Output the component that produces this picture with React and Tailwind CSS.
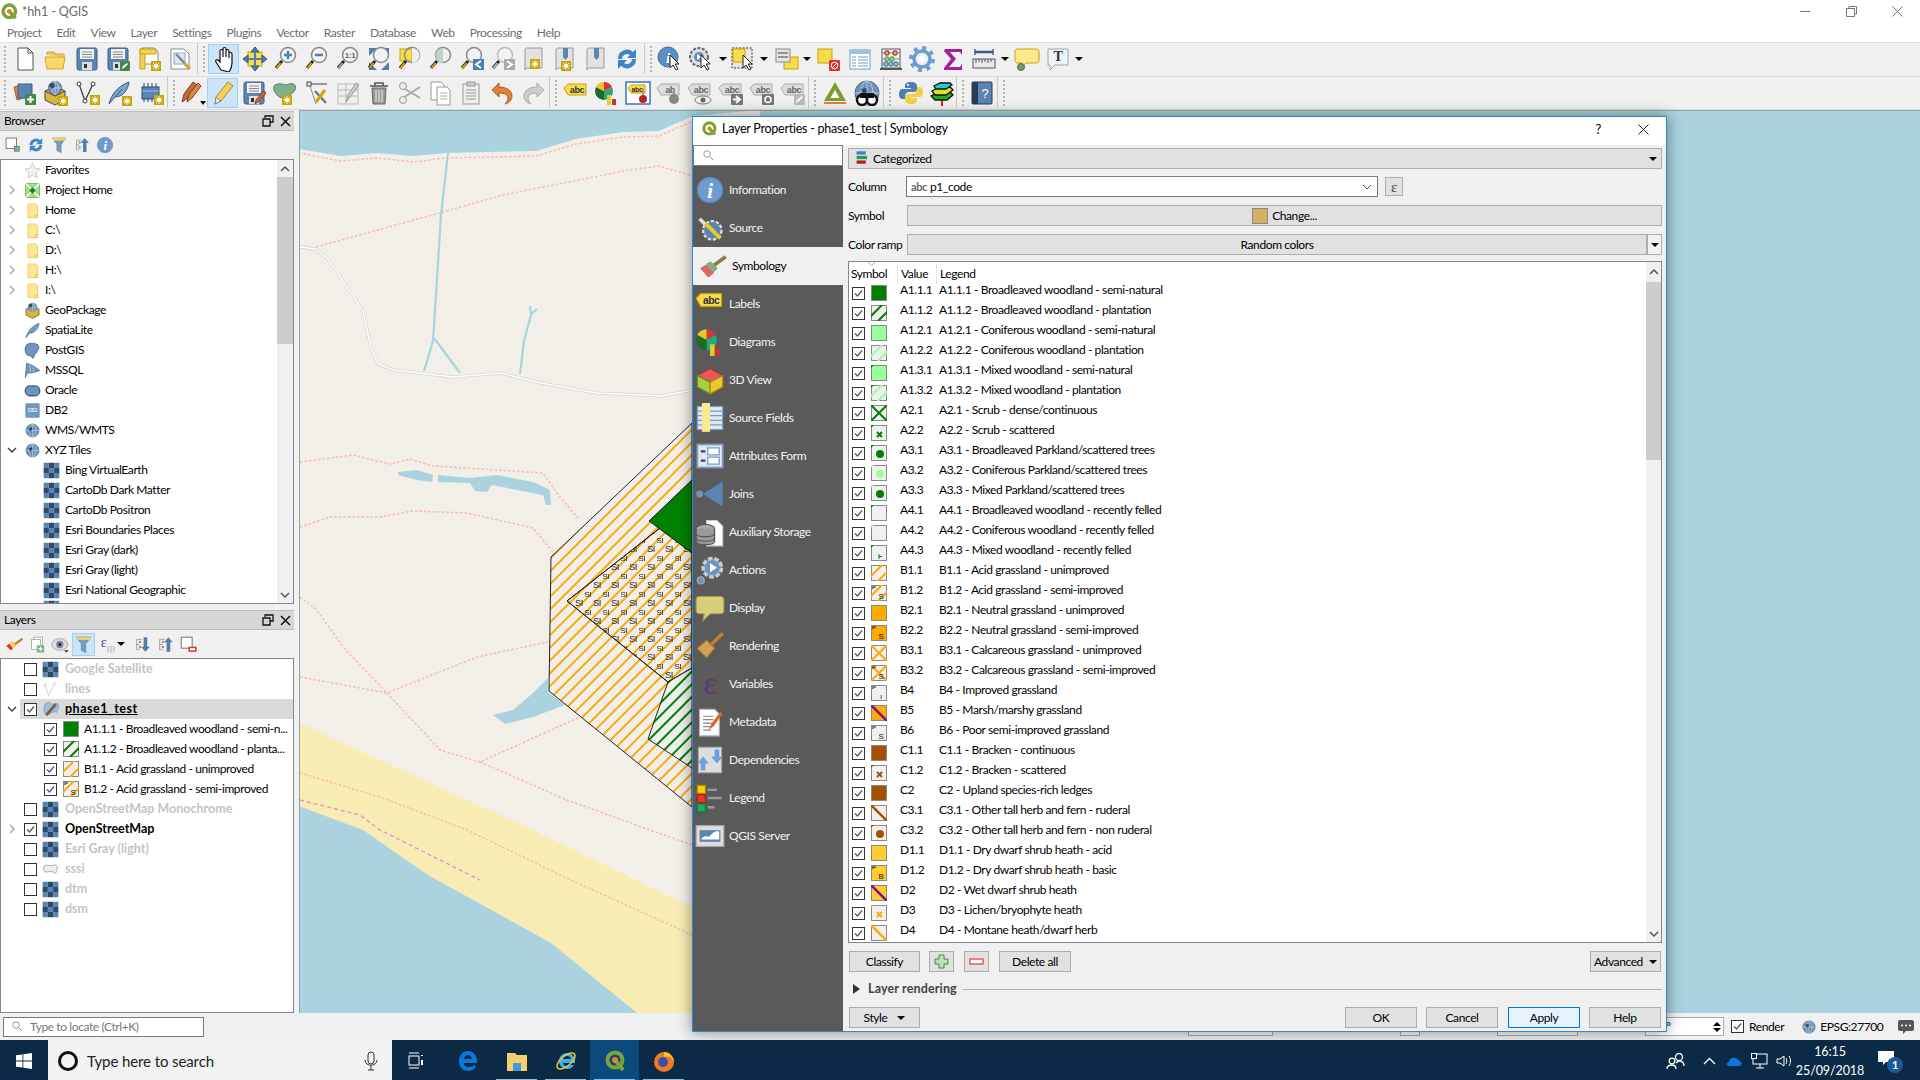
const Sun = ({ x = 15, y = 15 }) => (
    <g transform={`translate(${x} ${y})`}>
        <rect width="10" height="10" fill="#c9a300" />
        <path d="M5 1v8M1 5h8M2 2l6 6M8 2l-6 6" stroke="#fff" strokeWidth="0.8" />
        <circle cx="5" cy="5" r="2" fill="#fff" />
    </g>
);
const Arrow = ({ x = 0, y = 0 }) => (
    <path transform={`translate(${x} ${y})`} d="M12 10v13l3-3 3 5 2-1-3-5h4z" fill="#fff" stroke="#222" strokeWidth="1" />
);
const Mag = ({ fill = '#f2f2f2', ring = '#8a8a8a', handle = '#e0a800' }) => (
    <>
        <path d="M9 15l-6 7" stroke="#222" strokeWidth="3" />
        <path d="M7.5 17l-4 5" stroke={handle} strokeWidth="2" />
        <circle cx="15" cy="9" r="7.5" fill={fill} stroke={ring} strokeWidth="1.5" />
    </>
);
const Floppy = () => (
    <>
        <rect x="3" y="2" width="20" height="22" rx="2" fill="#5b84b1" stroke="#3e5f85" />
        <rect x="6" y="3" width="14" height="10" fill="#f2f2f2" />
        <path d="M8 6h10M8 8.5h10M8 11h10" stroke="#888" />
        <rect x="8" y="16" width="10" height="8" fill="#ddd" />
        <rect x="10" y="18" width="3" height="4" fill="#333" />
    </>
);
const Lbl = ({ c = '#ddd', b = '#aaa', t = 'abc', tc = '#666' }) => (
    <>
        <path d="M1 8l4-4h18v11H5z" fill={c} stroke={b} />
        <text x="14" y="13" fontSize="9" fontWeight="700" textAnchor="middle" fill={tc} fontFamily="Liberation Sans">{t}</text>
    </>
);
const Tile = () => (
    <>
        <rect x="1" y="1" width="24" height="24" fill="#fff" />
        <path d="M9 1h8v8H9zM1 9h8v8H1zM17 9h8v8h-8zM9 17h8v8H9z" fill="#2e4a6b" />
        <path d="M1 1h8v8H1zM17 1h8v8h-8zM9 9h8v8H9zM1 17h8v8H1zM17 17h8v8h-8z" fill="#5b84b1" />
    </>
);
const Globe = ({ x = 13, y = 13, r = 10 }) => (
    <>
        <circle cx={x} cy={y} r={r} fill="#6f93b8" stroke="#49688a" />
        <path d={`M${x - r} ${y}h${r * 2}M${x} ${y - r}v${r * 2}`} stroke="#cfdbe6" strokeWidth="0.8" />
        <ellipse cx={x} cy={y} rx={r / 2} ry={r} fill="none" stroke="#cfdbe6" strokeWidth="0.8" />
        <path d={`M${x - 6} ${y - 4}l5-1 1 4-4 2z`} fill="#2f4a66" />
    </>
);

const icons = {
    newp: <><path d="M6 2h10l5 5v17H6z" fill="#fff" stroke="#555" /><path d="M16 2v5h5" fill="none" stroke="#555" /></>,
    open: <><path d="M4 9V6h7l2 2h8v3" fill="#eec75a" stroke="#d2a62e" /><path d="M2 11h20l-2 12H4z" fill="#fbd765" stroke="#d2a62e" /></>,
    save: <Floppy />,
    saveas: <><Floppy /><rect x="15" y="15" width="10" height="10" rx="1" fill="#3f8a4b" /><path d="M17 23l1-3 4-3 1 1-4 4z" fill="#fff" /></>,
    layout: <><path d="M6 2h12l4 4v12H6z" fill="#fff" stroke="#888" /><path d="M4 3h5v20H4z" fill="#f2d25c" stroke="#c9a300" /><path d="M4 3h16v5H4z" fill="#f2d25c" stroke="#c9a300" /><Sun /></>,
    manager: <><path d="M4 3h13l5 5v15H4z" fill="#fff" stroke="#888" /><rect x="7" y="7" width="11" height="11" fill="#dfe8f2" stroke="#9ab" /><path d="M9 8l13 14" stroke="#888" strokeWidth="2.5" /><path d="M17 17l6 6" stroke="#d2a62e" strokeWidth="3" /></>,
    pan: <path d="M10 24l-5-8c-1-2 1-3 2-2l2 2V5c0-2 3-2 3 0v6-8c0-2 3-2 3 0v8-6c0-2 3-2 3 0v7-4c0-2 3-2 3 0v9c0 4-1 6-3 9z" fill="#fff" stroke="#111" strokeWidth="1.2" />,
    panto: <><rect x="6" y="6" width="14" height="14" fill="#f7dc4f" stroke="#c9a300" /><path d="M13 1l4 5H9zM13 25l-4-5h8zM1 13l5-4v8zM25 13l-5-4v8z" fill="#4f7fb0" stroke="#35587d" /><path d="M13 6v14M6 13h14" stroke="#4f7fb0" strokeWidth="2" /></>,
    zin: <><Mag /><path d="M15 5v8M11 9h8" stroke="#4f7fb0" strokeWidth="2.5" /></>,
    zout: <><Mag /><path d="M11 9h8" stroke="#4f7fb0" strokeWidth="2.5" /></>,
    z11: <><Mag handle="#aaa" /><text x="15" y="12" fontSize="8" fontWeight="700" textAnchor="middle" fill="#666" fontFamily="Liberation Sans">1:1</text></>,
    zfull: <><path d="M3 2h8L3 10zM23 2v8l-8-8zM3 24v-8l8 8zM23 24h-8l8-8z" fill="#4f7fb0" /><Mag /></>,
    zsel: <><rect x="3" y="3" width="12" height="12" fill="#f7dc4f" stroke="#c9a300" /><Mag fill="none" /><path d="M15 2a7.5 7.5 0 0 1 0 15z" fill="#eee" /></>,
    zlay: <><Mag fill="#eef2f2" /><path d="M15 2a7.5 7.5 0 0 0 0 15z" fill="#c5d3c5" /></>,
    zlast: <><Mag fill="#f2f2f2" /><rect x="14" y="13" width="11" height="11" fill="#4f7fb0" /><path d="M22 15l-5 3.5 5 3.5" fill="none" stroke="#fff" strokeWidth="2" /></>,
    znext: <><Mag handle="#bbb" ring="#bbb" /><rect x="14" y="13" width="11" height="11" fill="#aaa" /><path d="M17 15l5 3.5-5 3.5" fill="none" stroke="#fff" strokeWidth="2" /></>,
    map1: <><path d="M4 4c0-2 2-2 4-2h13v20H8c-2 0-4 0-4 2z" fill="#e2e2e2" stroke="#999" /><Sun x="9" y="13" /></>,
    map2: <><path d="M4 4c0-2 2-2 4-2h13v20H8c-2 0-4 0-4 2z" fill="#e2e2e2" stroke="#999" /><path d="M11 2h5v9l-2.5 3-2.5-3z" fill="#5b84b1" /><Sun x="9" y="15" /></>,
    map3: <><path d="M4 4c0-2 2-2 4-2h13v20H8c-2 0-4 0-4 2z" fill="#e2e2e2" stroke="#999" /><path d="M11 2h5v9l-2.5 3-2.5-3z" fill="#5b84b1" /></>,
    refresh: <><path d="M4 13a9 9 0 0 1 15-7l3-3v9h-9l3-3a5 5 0 0 0-8 4z" fill="#3f86c9" /><path d="M22 13a9 9 0 0 1-15 7l-3 3v-9h9l-3 3a5 5 0 0 0 8-4z" fill="#3f86c9" /></>,
    info: <><circle cx="11" cy="11" r="10" fill="#5c8ec4" stroke="#45709f" /><text x="11" y="17" fontSize="15" fontWeight="700" fontStyle="italic" textAnchor="middle" fill="#fff" fontFamily="Liberation Serif">i</text><Arrow x="1" y="-1" /></>,
    action: <><circle cx="11" cy="11" r="9" fill="#ddd" stroke="#666" strokeWidth="2" strokeDasharray="3 1.5" /><circle cx="11" cy="11" r="5" fill="#5c8ec4" /><path d="M9 8l5 3-5 3z" fill="#fff" /><Arrow x="1" y="-1" /></>,
    select: <><rect x="2" y="2" width="20" height="20" fill="#e5e5e5" stroke="#333" strokeDasharray="2 1.5" /><rect x="3" y="3" width="12" height="13" fill="#f7dc4f" stroke="#c9a300" /><Arrow x="1" y="-1" /></>,
    form: <><rect x="10" y="11" width="14" height="12" fill="#f7dc4f" stroke="#c9a300" /><rect x="2" y="3" width="14" height="13" fill="#e4e4e4" stroke="#888" /><path d="M4 7h10M4 11h10" stroke="#777" strokeWidth="1.5" /></>,
    desel: <><rect x="2" y="3" width="14" height="14" fill="#f7dc4f" stroke="#c9a300" /><rect x="13" y="14" width="11" height="11" rx="1" fill="#d33" /><circle cx="18.5" cy="19.5" r="3.3" fill="none" stroke="#fff" /><path d="M16 22l5-5" stroke="#fff" /></>,
    table: <><rect x="3" y="4" width="20" height="19" fill="#fff" stroke="#6e9bc8" /><path d="M3 4h20v4H3z" fill="#9cc0e0" /><path d="M5 11h4M5 14h4M5 17h4M5 20h4M11 11h10M11 14h10M11 17h10M11 20h10" stroke="#6e9bc8" /></>,
    abacus: <><rect x="4" y="3" width="18" height="19" fill="none" stroke="#555" /><path d="M2 23h22" stroke="#555" strokeWidth="2" /><path d="M4 7h18M4 13h18M4 18h18" stroke="#888" /><circle cx="9" cy="7" r="2" fill="none" stroke="#c33" strokeWidth="1.3" /><circle cx="17" cy="7" r="2" fill="none" stroke="#c33" strokeWidth="1.3" /><circle cx="9" cy="13" r="2" fill="none" stroke="#5a5" strokeWidth="1.3" /><circle cx="14" cy="13" r="2" fill="none" stroke="#5a5" strokeWidth="1.3" /><circle cx="8" cy="18" r="2" fill="none" stroke="#48a" strokeWidth="1.3" /><circle cx="13" cy="18" r="2" fill="none" stroke="#48a" strokeWidth="1.3" /><circle cx="18" cy="18" r="2" fill="none" stroke="#48a" strokeWidth="1.3" /></>,
    gear: <><circle cx="13" cy="13" r="8" fill="none" stroke="#6e9bd0" strokeWidth="3.5" /><circle cx="13" cy="13" r="11" fill="none" stroke="#6e9bd0" strokeWidth="4" strokeDasharray="4 4.6" /><circle cx="13" cy="13" r="3" fill="#fff" /></>,
    sigma: <path d="M5 3h17v6l-2-3H10l6 7-7 8h11l2-3v6H4v-2l7-9-7-8z" fill="#a020a0" />,
    ruler: <><path d="M4 6h18" stroke="#3d5f85" strokeWidth="2.5" /><path d="M4 3v6M22 3v6" stroke="#3d5f85" strokeWidth="1.5" /><rect x="2" y="13" width="22" height="9" fill="#e8e8e8" stroke="#555" /><path d="M5 13v4M8 13v3M11 13v4M14 13v3M17 13v4M20 13v3" stroke="#555" /></>,
    tip: <><path d="M4 3h18c2 0 3 1 3 3v8c0 2-1 3-3 3H12l-4 4v-4H4c-2 0-3-1-3-3V6c0-2 1-3 3-3z" fill="#fbe98e" stroke="#c9a300" /><circle cx="7" cy="21" r="3.5" fill="#6f9a6f" stroke="#666" /></>,
    annot: <><path d="M3 3h20v16H10l-5 5v-5H3z" fill="#eef3f5" stroke="#9aa" /><text x="13" y="15" fontSize="14" fontWeight="700" textAnchor="middle" fill="#333" fontFamily="Liberation Serif">T</text></>,
    dsm: <><path d="M3 7l13-3 2 12-12 4z" fill="#d98a42" stroke="#a85f20" /><path d="M7 4h14v14H7z" fill="#5b84b1" stroke="#3e5f85" /><rect x="14" y="14" width="11" height="11" rx="1" fill="#3f8a4b" /><path d="M19.5 16v7M16 19.5h7" stroke="#fff" strokeWidth="2" /></>,
    gpkg: <><path d="M3 11l10-5 10 5v9l-10 5-10-5z" fill="#d9b63a" stroke="#444" /><path d="M3 11l10 5 10-5" fill="none" stroke="#444" /><Globe x={13} y={8} r={6.5} /><Sun x="16" y="16" /></>,
    gpkg0: <><path d="M3 11l10-5 10 5v9l-10 5-10-5z" fill="#d9b63a" stroke="#444" /><Globe x={13} y={8} r={6.5} /></>,
    shape: <><path d="M5 4l6 17 8-17" fill="none" stroke="#333" strokeWidth="1.2" /><circle cx="5" cy="4" r="2" fill="#fff" stroke="#333" /><circle cx="11" cy="21" r="2" fill="#fff" stroke="#333" /><circle cx="19" cy="4" r="2" fill="#fff" stroke="#333" /><Sun x="16" y="15" /></>,
    feather: <><path d="M3 24c2-8 7-17 20-22-1 9-7 15-14 15" fill="#7ea2c8" stroke="#3d5f85" /><path d="M3 24L16 9" stroke="#3d5f85" /></>,
    spat: <><path d="M3 24c2-8 7-17 20-22-1 9-7 15-14 15" fill="#7ea2c8" stroke="#3d5f85" /><path d="M3 24L16 9" stroke="#3d5f85" /><Sun x="16" y="16" /></>,
    chip: <><rect x="4" y="7" width="17" height="12" fill="#5b84b1" stroke="#2e4a6b" /><path d="M6 3v4M10 3v4M14 3v4M18 3v4M6 19v3M10 19v3M14 19v3" stroke="#2e4a6b" /><path d="M4 11h17" stroke="#9cc0e0" /><Sun x="16" y="15" /></>,
    pencils: <><path d="M2 22l2-8 9-12 4 3-9 13z" fill="#c66a3d" stroke="#7a3f20" /><path d="M7 22l2-8 9-11 3 3-9 12z" fill="#d98a42" stroke="#7a3f20" /><path d="M20 21h6l-3 4z" fill="#111" /></>,
    pencil: <><path d="M5 24l1-7L18 2l5 4L11 21z" fill="#f2d25c" stroke="#a88a20" /><path d="M5 24l1-7 5 4z" fill="#eee" stroke="#888" /></>,
    savee: <><Floppy /><path d="M14 24l1-4 8-9 2 2-8 9z" fill="#d9692f" stroke="#8a3f10" /></>,
    addf: <><path d="M3 5c6-3 9 1 14-1s8 2 6 6-4 3-6 6-9 3-12-1S0 8 3 5z" fill="#7faf8a" stroke="#5a8a66" /><Sun x="10" y="15" /></>,
    vertex: <><rect x="3" y="2" width="4" height="4" fill="none" stroke="#444" /><path d="M7 4h16" stroke="#444" /><path d="M6 6l6 18" stroke="#888" /><path d="M11 11l11 12" stroke="#777" strokeWidth="2.5" /><path d="M21 10l-9 12" stroke="#d9a300" strokeWidth="3" /></>,
    modify: <><rect x="3" y="4" width="20" height="20" fill="#eee" stroke="#bbb" /><path d="M3 10h20M3 16h20M11 4v20" stroke="#bbb" /><path d="M11 22l2-7 8-12 3 2-9 12z" fill="#ccc" stroke="#999" /></>,
    trash: <><path d="M4 6h18M9 6V3h8v3" fill="none" stroke="#555" strokeWidth="1.6" /><path d="M6 8h14l-1 16H7z" fill="#999" stroke="#666" /><path d="M10 10v12M13 10v12M16 10v12" stroke="#eee" /></>,
    cut: <><path d="M3 6l20 12M3 20L23 7" stroke="#aaa" strokeWidth="2" /><circle cx="6" cy="6" r="3.5" fill="#eee" stroke="#999" /><circle cx="6" cy="20" r="3.5" fill="#eee" stroke="#999" /></>,
    copy: <><path d="M3 2h10l3 3v15H3z" fill="#fff" stroke="#999" /><path d="M9 7h10l3 3v15H9z" fill="#fff" stroke="#999" /><path d="M12 13h7M12 16h7M12 19h7" stroke="#aaa" /></>,
    paste: <><rect x="5" y="4" width="16" height="20" fill="#eee" stroke="#999" /><rect x="9" y="2" width="8" height="4" fill="#ccc" stroke="#999" /><path d="M8 10h10M8 13h10M8 16h10M8 19h10" stroke="#999" /></>,
    undo: <path d="M3 10l7-7v4c8 0 13 4 13 9 0 4-3 7-7 8 2-2 3-4 3-6 0-3-3-5-9-5v4z" fill="#e0803a" stroke="#b85a1a" />,
    redo: <path d="M23 10l-7-7v4C8 7 3 11 3 16c0 4 3 7 7 8-2-2-3-4-3-6 0-3 3-5 9-5v4z" fill="#ccc" stroke="#aaa" />,
    lab1: <Lbl c="#f7dc4f" b="#c9a300" tc="#333" />,
    diag: <><path d="M10 11V2a9 9 0 0 1 8 5z" fill="#d33" /><path d="M10 11l8-4a9 9 0 0 1-8 13z" fill="#2a7" /><path d="M10 11v9a9 9 0 0 1-8-13z" fill="#1a6a2a" /><path d="M10 11L2 7a9 9 0 0 1 8-5z" fill="#e8c82a" /><rect x="13" y="15" width="4" height="10" fill="#e8c82a" /><rect x="18" y="19" width="4" height="6" fill="#c33" /></>,
    lab2: <><rect x="1" y="2" width="24" height="22" fill="#fff" stroke="#2a6ac0" strokeWidth="1.4" /><path d="M3 8l3-3h14v8H6z" fill="#f7dc4f" stroke="#c9a300" /><text x="12" y="12" fontSize="7" fontWeight="700" textAnchor="middle" fill="#333" fontFamily="Liberation Sans">abc</text><path d="M18 9v8" stroke="#999" strokeWidth="2" /><circle cx="18" cy="19" r="4" fill="#b22" /></>,
    lab3: <><Lbl t="ab" /><path d="M18 9v8" stroke="#999" strokeWidth="2" /><circle cx="18" cy="19" r="5" fill="#888" /></>,
    lab4: <><Lbl /><ellipse cx="16" cy="20" rx="8" ry="4" fill="#f2f2f2" stroke="#777" /><circle cx="16" cy="20" r="2.5" fill="#666" /></>,
    lab5: <><Lbl /><rect x="13" y="14" width="12" height="11" rx="1" fill="#777" /><path d="M15 19.5h5M18 16l4 3.5-4 3.5" fill="none" stroke="#fff" strokeWidth="2" /></>,
    lab6: <><Lbl /><rect x="13" y="14" width="12" height="11" rx="1" fill="#777" /><circle cx="19" cy="19.5" r="3" fill="none" stroke="#fff" strokeWidth="1.6" /></>,
    lab7: <><Lbl /><rect x="14" y="14" width="11" height="11" rx="1" fill="#bbb" /><path d="M16 23l1-3 5-4 1 1-5 5z" fill="#fff" /></>,
    delta: <><path d="M13 2l11 19H2z" fill="#7a9e2e" /><path d="M13 10l4.5 8h-9z" fill="#fff" /><rect x="2" y="22" width="22" height="2" fill="#e0803a" /></>,
    binoc: <><Globe r={12} /><circle cx="8" cy="20" r="5" fill="#fff" stroke="#111" strokeWidth="2.5" /><circle cx="18" cy="20" r="5" fill="#fff" stroke="#111" strokeWidth="2.5" /><rect x="6" y="13" width="14" height="5" fill="#111" /></>,
    python: <><path d="M13 2c-5 0-6 2-6 4v2h6v1H5c-3 0-4 2-4 5s1 5 4 5h2v-3c0-2 2-4 4-4h5c2 0 3-1 3-3V6c0-2-2-4-6-4z" fill="#4f7fb0" /><path d="M13 24c5 0 6-2 6-4v-2h-6v-1h8c3 0 4-2 4-5s-1-5-4-5h-2v3c0 2-2 4-4 4h-5c-2 0-3 1-3 3v3c0 2 2 4 6 4z" fill="#f4cf4a" /><circle cx="10" cy="5" r="1" fill="#fff" /></>,
    lay3d: <><path d="M13 2v24" stroke="#d22" strokeWidth="2" /><path d="M2 16l7-4h12l3 3-6 5H6z" fill="#2a2" stroke="#111" strokeWidth="1.3" /><path d="M3 11l7-4h11l3 3-7 5H6z" fill="#dfe02a" stroke="#111" strokeWidth="1.3" /><path d="M5 6l6-3h10l2 2-6 4H7z" fill="#2cc" stroke="#111" strokeWidth="1.3" /></>,
    book: <><rect x="3" y="2" width="20" height="22" rx="1" fill="#5b84b1" stroke="#2a3a4f" /><rect x="3" y="2" width="6" height="22" fill="#2a3a4f" /><text x="16" y="18" fontSize="13" textAnchor="middle" fill="#fff" fontFamily="Liberation Sans">?</text></>,
    lnew: <><rect x="3" y="3" width="15" height="15" fill="#fff" stroke="#777" strokeWidth="1.4" /><rect x="15" y="15" width="7" height="7" fill="#7fb48a" stroke="#4a7a55" /></>,
    filter: <><path d="M3 3h20l-7 9v12l-6-3v-9z" fill="#7a9cc0" stroke="#5a7ca0" /><path d="M3 3h20l-2 4H5z" fill="#f2d25c" /></>,
    collapse: <><path d="M5 6h7M5 6v14h4M5 13h4" stroke="#888" fill="none" /><rect x="8" y="8" width="3" height="3" fill="#e0803a" /><rect x="8" y="15" width="3" height="3" fill="#e0803a" /><path d="M17 3l6 7h-3.5v13h-5V10H11z" fill="#4f7fb0" /></>,
    expand: <><path d="M5 6h7M5 6v14h4M5 13h4" stroke="#888" fill="none" /><rect x="8" y="8" width="3" height="3" fill="#e0803a" /><rect x="8" y="15" width="3" height="3" fill="#e0803a" /><path d="M17 23l6-7h-3.5V3h-5v13H11z" fill="#4f7fb0" /></>,
    infos: <><circle cx="13" cy="13" r="11" fill="#6e9bd0" stroke="#5a82b0" /><text x="13" y="20" fontSize="18" fontWeight="700" fontStyle="italic" textAnchor="middle" fill="#fff" fontFamily="Liberation Serif">i</text></>,
    style: <><path d="M13 13L24 5" stroke="#8a7a4a" strokeWidth="3" /><path d="M2 15l9-6 6 6-8 8z" fill="#8fa8c8" /><path d="M2 15l5-3 7 7-5 4z" fill="#d9695f" /><path d="M7 11l4-2 6 6-3 3z" fill="#7fb46b" /></>,
    paint: <><path d="M13 13L24 5" stroke="#b8862a" strokeWidth="3" /><path d="M2 15l8-6 5 5-7 7z" fill="#e0803a" /><path d="M2 15l4-3 5 6-3 3z" fill="#d33" /><path d="M6 12l4-3 5 5-4 4z" fill="#f2d25c" /></>,
    addg: <><rect x="8" y="3" width="12" height="14" fill="#fff" stroke="#999" /><rect x="5" y="6" width="12" height="14" fill="#fff" stroke="#999" /><rect x="12" y="14" width="10" height="10" fill="#7fb48a" /><path d="M17 16v6M14 19h6" stroke="#fff" strokeWidth="1.5" /></>,
    eye: <><ellipse cx="12" cy="13" rx="11" ry="8" fill="#ddd" stroke="#999" /><circle cx="12" cy="13" r="5" fill="#7a8a9a" /><circle cx="12" cy="13" r="2" fill="#222" /><path d="M18 21h6l-3 3z" fill="#222" /></>,
    eps: <><text x="9" y="16" fontSize="20" textAnchor="middle" fill="#6a3a8a" fontFamily="Liberation Serif">ε</text><path d="M14 15h10v9H14z" fill="#ccc" /><path d="M17 15v9M21 15v9" stroke="#fff" /></>,
    lremove: <><rect x="3" y="3" width="15" height="15" fill="#fff" stroke="#777" strokeWidth="1.4" /><rect x="14" y="17" width="9" height="5" fill="#fff" stroke="#d33" strokeWidth="2" /></>,
    star: <path d="M13 2l3.5 7.5 8 1-6 5.5 1.5 8-7-4-7 4 1.5-8-6-5.5 8-1z" fill="#f2f2ec" stroke="#b8b8a8" />,
    phome: <><rect x="2" y="2" width="22" height="22" fill="#a8dc8a" stroke="#5ca83a" /><path d="M2 2l22 22M24 2L2 24" stroke="#fff" strokeWidth="2" /><path d="M13 8l5 5-5 5-5-5z" fill="#0a8a2a" /></>,
    fold: <><path d="M6 3h12l3 3v18H6z" fill="#fee698" stroke="#e8bd3a" /><rect x="17" y="20" width="4" height="4" fill="#fee698" stroke="#e8bd3a" /></>,
    pg: <path d="M4 4c4-3 12-3 17 0 3 3 2 8-1 10 0 3-2 4-3 3l-2 7c-2 1-4 0-4-3-5 1-8-1-9-6-1-4 0-8 2-11z" fill="#6e93bc" stroke="#3e5f85" />,
    mssql: <><path d="M4 2c8 2 14 6 20 11-6 3-12 4-19 4l-3 7z" fill="#6e93bc" stroke="#3e5f85" /><path d="M9 4l1 12M14 7l1 9" stroke="#cfdbe6" /></>,
    oracle: <rect x="2" y="6" width="22" height="15" rx="7" fill="#6e93bc" stroke="#3a5f85" strokeWidth="2" />,
    db2: <><rect x="2" y="2" width="22" height="22" rx="2" fill="#7097c2" /><text x="13" y="16" fontSize="8" textAnchor="middle" fill="#fff" fontFamily="Liberation Sans">DB2</text></>,
    wms: <Globe />,
    tile: <Tile />,
    lines: <><path d="M5 6l5 16 9-18" fill="none" stroke="#bbb" /><circle cx="5" cy="6" r="1.7" fill="#fff" stroke="#bbb" /><circle cx="19" cy="4" r="1.7" fill="#fff" stroke="#bbb" /></>,
    poly: <><path d="M4 6c4-3 8-3 10 0 3 1 7-3 9 0 2 3 0 9-2 12-3-3-7 1-10 2s-8 0-8-4 1-7 1-10z" fill="#9cc0e0" stroke="#6e93bc" /><path d="M6 22L20 6" stroke="#8a5a3a" strokeWidth="4" /></>,
    raster: <path d="M3 8c3-3 6-1 10-1s8-2 10 1c2 4-1 5-1 8s-2 3-5 1-9 0-11 0-5-3-3-9z" fill="#eee" stroke="#aaa" strokeWidth="1.5" />,
    source: <><path d="M4 5l9 9" stroke="#ddd" strokeWidth="3" /><circle cx="15" cy="15" r="8" fill="#5b84b1" stroke="#ddd" strokeWidth="2" strokeDasharray="3 1.5" /><path d="M9 9l13 13" stroke="#e8c82a" strokeWidth="3.5" /></>,
    form3d: <><path d="M13 3l11 6-11 6L2 9z" fill="#e85a5a" stroke="#a33" /><path d="M2 9l11 6v10L2 19z" fill="#a8d040" stroke="#6a8a20" /><path d="M24 9l-11 6v10l11-6z" fill="#e8c82a" stroke="#a88a20" /></>,
    fields: <><rect x="2" y="3" width="22" height="20" fill="#dfe8f2" stroke="#7a9cc0" /><path d="M2 7h22M2 11h22M2 15h22M2 19h22" stroke="#7a9cc0" /><rect x="6" y="0" width="7" height="25" fill="#fbe98e" /></>,
    attr: <><rect x="2" y="3" width="22" height="20" fill="#dfe8f2" stroke="#7a9cc0" strokeWidth="1.5" /><path d="M5 9h4M5 17h4" stroke="#444" strokeWidth="2" /><rect x="11" y="6" width="10" height="6" fill="#fff" stroke="#6e93bc" /><rect x="11" y="14" width="10" height="6" fill="#fff" stroke="#6e93bc" /></>,
    joins: <><circle cx="4" cy="13" r="3" fill="#6e93bc" /><path d="M7 13L24 2v22z" fill="#5b84b1" /></>,
    aux: <><path d="M10 3h9l5 5v17H10z" fill="#fff" stroke="#ccc" /><ellipse cx="9" cy="10" rx="8" ry="3.5" fill="#aaa" stroke="#555" /><path d="M1 10v11c0 4 16 4 16 0V10" fill="#999" stroke="#555" /><path d="M1 14c0 4 16 4 16 0M1 18c0 4 16 4 16 0" fill="none" stroke="#555" /></>,
    actions: <><circle cx="15" cy="11" r="8" fill="#6e93bc" stroke="#ccc" strokeWidth="3" strokeDasharray="4 1.6" /><path d="M13 7l6 4-6 4z" fill="#fff" /><circle cx="5" cy="22" r="3" fill="#6e93bc" stroke="#aaa" /></>,
    display: <path d="M4 3h18c2 0 3 1 3 3v9c0 2-1 3-3 3H13l-6 6 1-6H4c-2 0-3-1-3-3V6c0-2 1-3 3-3z" fill="#d8cf7e" stroke="#a89e50" />,
    render: <><path d="M14 12L24 2" stroke="#b8862a" strokeWidth="3" /><path d="M2 15l8-7 7 7-7 8z" fill="#d2a05a" stroke="#a87a30" /></>,
    vars: <text x="13" y="22" fontSize="28" textAnchor="middle" fill="#5d3a6e" fontFamily="Liberation Serif">ε</text>,
    meta: <><path d="M4 2h13l4 4v19H4z" fill="#fff" stroke="#bbb" /><path d="M7 8h9M7 11h9M7 14h9M7 17h7M7 20h7" stroke="#888" /><path d="M12 20l2-5 8-11 2 2-8 11z" fill="#d9692f" /></>,
    deps: <><rect x="3" y="2" width="20" height="22" fill="#ddd" stroke="#aaa" /><path d="M2 16l5-6 5 6H9v6H5v-6z" fill="#6ea0dc" /><path d="M24 10l-5 6-5-6h3V4h4v6z" fill="#6ea0dc" /></>,
    legend: <><rect x="2" y="2" width="7" height="7" fill="#fc0" stroke="#a80" /><rect x="2" y="10" width="7" height="7" fill="#e33" stroke="#a20" /><rect x="2" y="18" width="7" height="7" fill="#2a6" stroke="#174" /><path d="M11 6h8M11 13h12M11 21h6" stroke="#999" strokeWidth="2" /></>,
    server: <><rect x="1" y="4" width="24" height="18" fill="#ddd" stroke="#aaa" /><path d="M4 8h18v10H4z" fill="#5b84b1" /><path d="M5 16c4-6 6 0 9-4s5-3 7-3v7z" fill="#fff" /></>,
    categ: <><rect x="4" y="2" width="14" height="5" fill="#2a8ac0" /><rect x="4" y="9" width="16" height="5" fill="#1e9a5a" /><rect x="4" y="16" width="14" height="5" fill="#b02020" /></>,
    search: <><circle cx="10" cy="10" r="6.5" fill="none" stroke="#888" strokeWidth="1.6" /><path d="M15 15l7 7" stroke="#888" strokeWidth="2" /></>,
    qgis: <><circle cx="12" cy="12" r="9" fill="none" stroke="#7ba33a" strokeWidth="5" /><path d="M13 13l8 9" stroke="#7ba33a" strokeWidth="5" /><circle cx="12" cy="12" r="3.5" fill="#e8812e" /></>,
};

const Ic = ({ n, s = 26, className = '' }) => (
    <svg width={s} height={s} viewBox="0 0 26 26" className={`shrink-0 ${className}`}>{icons[n]}</svg>
);
const Caret = ({ className = '' }) => <div className={`w-0 h-0 border-x-[4px] border-x-transparent border-t-[4px] border-t-black shrink-0 ${className}`} />;
const Chev = ({ open, className = '' }) => (
    <svg width="10" height="10" viewBox="0 0 10 10" className={`shrink-0 ${className}`}>
        <path d={open ? 'M1 3l4 4 4-4' : 'M3 1l4 4-4 4'} fill="none" stroke={open ? '#444' : '#aaa'} strokeWidth="1.5" />
    </svg>
);
const Check = ({ on = true, className = '' }) => (
    <div className={`w-[13px] h-[13px] border border-[#333] bg-white shrink-0 ${className}`}>
        {on && <svg width="11" height="11" viewBox="0 0 11 11"><path d="M2 5.5l2.5 2.5L9 2.5" fill="none" stroke="#555" strokeWidth="1.2" /></svg>}
    </div>
);
const Grip = () => <div className="w-[3px] h-[26px] mx-[2px] border-l-2 border-dotted border-[#b5b5b5] shrink-0" />;
const Sep = () => <div className="w-px h-full bg-[#c8c8c8] shrink-0" />;

const Tb = ({ n, w = 31, active, caret, s = 26 }) => (
    <>
        <div style={{ width: w }} className={`h-[30px] flex items-center justify-center shrink-0 ${active ? 'bg-[#cce4f7] border border-[#99d1ff]' : ''}`}>
            <Ic n={n} s={s} />
        </div>
        {caret && <Caret className={caret} />}
    </>
);

const Symb = ({ bg = '#f0f0f0', h, x, b, k, d, sx, t, tick, border = '#8a8a8a', sw = 2 }) => (
    <svg width="16" height="16" viewBox="0 0 16 16" className="shrink-0">
        <rect x="0.5" y="0.5" width="15" height="15" fill={bg} stroke={border} />
        {h && <path d="M-1 12L12 -1M5 18L18 5" stroke={h} strokeWidth={sw} />}
        {x && <path d="M0 0L16 16M16 0L0 16" stroke={x} strokeWidth="2" />}
        {b && <path d="M0 0L16 16" stroke={b} strokeWidth="2.5" />}
        {k && <path d="M0 0h3L0 3z" fill={k} />}
        {d && <circle cx="9" cy="9" r="4" fill={d} />}
        {sx && <path d="M6 7l5 5M11 7l-5 5" stroke={sx} strokeWidth="2" />}
        {tick && <path d="M8 9v5M8 11.5h3" stroke={tick} fill="none" />}
        {t && <text x="10" y="14" fontSize="8" textAnchor="middle" fill="#111" fontFamily="Liberation Sans">{t}</text>}
        {t && <path d="M2 1v3M4 1v2" stroke="#111" />}
    </svg>
);

const O = '#ffaa00', G = '#008000', L = '#99ff99', B = '#a35200', Y = '#ffcc33', P = '#8a0a8a';
const rows = [
    ['A1.1.1', 'A1.1.1 - Broadleaved woodland - semi-natural', { bg: G }],
    ['A1.1.2', 'A1.1.2 - Broadleaved woodland - plantation', { h: G }],
    ['A1.2.1', 'A1.2.1 - Coniferous woodland - semi-natural', { bg: L }],
    ['A1.2.2', 'A1.2.2 - Coniferous woodland - plantation', { h: L }],
    ['A1.3.1', 'A1.3.1 - Mixed woodland - semi-natural', { bg: L, k: G }],
    ['A1.3.2', 'A1.3.2 - Mixed woodland - plantation', { h: L, k: G }],
    ['A2.1', 'A2.1 - Scrub - dense/continuous', { x: G }],
    ['A2.2', 'A2.2 - Scrub - scattered', { k: G, sx: G }],
    ['A3.1', 'A3.1 - Broadleaved Parkland/scattered trees', { k: G, d: G }],
    ['A3.2', 'A3.2 - Coniferous Parkland/scattered trees', { k: L, d: L }],
    ['A3.3', 'A3.3 - Mixed Parkland/scattered trees', { k: L, d: G }],
    ['A4.1', 'A4.1 - Broadleaved woodland - recently felled', { k: G }],
    ['A4.2', 'A4.2 - Coniferous woodland - recently felled', { k: L }],
    ['A4.3', 'A4.3 - Mixed woodland - recently felled', { k: G, tick: G }],
    ['B1.1', 'B1.1 - Acid grassland - unimproved', { h: O }],
    ['B1.2', 'B1.2 - Acid grassland - semi-improved', { h: O, t: 'S' }],
    ['B2.1', 'B2.1 - Neutral grassland - unimproved', { bg: O }],
    ['B2.2', 'B2.2 - Neutral grassland - semi-improved', { bg: O, t: 'S' }],
    ['B3.1', 'B3.1 - Calcareous grassland - unimproved', { x: O }],
    ['B3.2', 'B3.2 - Calcareous grassland - semi-improved', { x: O, t: 'S' }],
    ['B4', 'B4 - Improved grassland', { t: 'ı' }],
    ['B5', 'B5 - Marsh/marshy grassland', { bg: O, b: P }],
    ['B6', 'B6 - Poor semi-improved grassland', { t: 'S' }],
    ['C1.1', 'C1.1 - Bracken - continuous', { bg: B }],
    ['C1.2', 'C1.2 - Bracken - scattered', { k: B, sx: B }],
    ['C2', 'C2 - Upland species-rich ledges', { bg: B }],
    ['C3.1', 'C3.1 - Other tall herb and fern - ruderal', { b: B }],
    ['C3.2', 'C3.2 - Other tall herb and fern - non ruderal', { k: B, d: B }],
    ['D1.1', 'D1.1 - Dry dwarf shrub heath - acid', { bg: Y }],
    ['D1.2', 'D1.2 - Dry dwarf shrub heath - basic', { bg: Y, t: 'B' }],
    ['D2', 'D2 - Wet dwarf shrub heath', { bg: Y, b: P }],
    ['D3', 'D3 - Lichen/bryophyte heath', { k: O, sx: O }],
    ['D4', 'D4 - Montane heath/dwarf herb', { b: O }],
];

const browserRows = [
    [0, 'star', 'Favorites'], [1, 'phome', 'Project Home'], [1, 'fold', 'Home'], [1, 'fold', 'C:\\'], [1, 'fold', 'D:\\'],
    [1, 'fold', 'H:\\'], [1, 'fold', 'I:\\'], [0, 'gpkg0', 'GeoPackage'], [0, 'feather', 'SpatiaLite'], [0, 'pg', 'PostGIS'],
    [0, 'mssql', 'MSSQL'], [0, 'oracle', 'Oracle'], [0, 'db2', 'DB2'], [0, 'wms', 'WMS/WMTS'], [2, 'wms', 'XYZ Tiles'],
];
const xyz = ['Bing VirtualEarth', 'CartoDb Dark Matter', 'CartoDb Positron', 'Esri Boundaries Places', 'Esri Gray (dark)', 'Esri Gray (light)', 'Esri National Geographic'];

const sidebar = [
    ['infos', 'Information'], ['source', 'Source'], ['style', 'Symbology', true], ['lab1', 'Labels'], ['diag', 'Diagrams'], ['form3d', '3D View'],
    ['fields', 'Source Fields'], ['attr', 'Attributes Form'], ['joins', 'Joins'], ['aux', 'Auxiliary Storage'], ['actions', 'Actions'], ['display', 'Display'],
    ['render', 'Rendering'], ['vars', 'Variables'], ['meta', 'Metadata'], ['deps', 'Dependencies'], ['legend', 'Legend'], ['server', 'QGIS Server'],
];

const menus = ['Project', 'Edit', 'View', 'Layer', 'Settings', 'Plugins', 'Vector', 'Raster', 'Database', 'Web', 'Processing', 'Help'];

const PanelHead = ({ title }) => (
    <div className="h-[20px] bg-[#d6d6d6] border-y border-[#bdbdbd] flex items-center pl-1 pr-[3px] shrink-0">
        <span className="flex-1">{title}</span>
        <svg width="12" height="12" viewBox="0 0 12 12" className="mr-[6px]"><path d="M3 3V1h8v6H8M1 4h7v7H1z" fill="none" stroke="#111" strokeWidth="1.3" /></svg>
        <svg width="11" height="11" viewBox="0 0 11 11"><path d="M1 1l9 9M10 1l-9 9" stroke="#111" strokeWidth="1.5" /></svg>
    </div>
);

const Btn = ({ children, className = '' }) => (
    <div className={`h-[21px] bg-[#e1e1e1] border border-[#adadad] flex items-center justify-center shrink-0 ${className}`}>{children}</div>
);

const MapView = () => (
    <svg viewBox="299 110 1621 903" width="1621" height="903" className="block">
        <defs>
            <pattern id="ho" patternUnits="userSpaceOnUse" width="9" height="9" patternTransform="rotate(45)">
                <rect width="9" height="9" fill="#efefef" />
                <rect width="2" height="9" fill="#ffaa00" />
            </pattern>
            <pattern id="hg" patternUnits="userSpaceOnUse" width="9" height="9" patternTransform="rotate(45)">
                <rect width="9" height="9" fill="#efefef" />
                <rect width="2" height="9" fill="#008000" />
            </pattern>
            <pattern id="si" patternUnits="userSpaceOnUse" width="18" height="18" patternTransform="translate(574 599)">
                <text x="5" y="7" fontSize="9.5" textAnchor="middle" fill="#222" fontFamily="Liberation Sans">SI</text>
                <text x="14" y="16" fontSize="8" textAnchor="middle" fill="#222" fontFamily="Liberation Sans">SI</text>
            </pattern>
        </defs>
        <rect x="299" y="110" width="1621" height="903" fill="#aad3df" />
        <path d="M299 149L341 156L378 153L413 156L446 153L536 151L576 139L623 132L659 131L693 116L760 110L760 1013L299 1013Z" fill="#f2efe9" />
        <path d="M299 723L533 830L760 940L760 1013L299 1013Z" fill="#f8ecb4" />
        <path d="M299 806L363 830L428 875L551 943L637 1013L299 1013Z" fill="#aad3df" />
        <g fill="none" stroke="#f9b9b0" strokeWidth="1.5" strokeDasharray="2.5 2">
            <path d="M299 153L341 161L378 158L413 162L446 158L536 156L576 144L623 137L659 136L693 121" />
            <path d="M316 247L443 212L503 195L629 170L659 166L693 176" />
            <path d="M300 462L353 455L390 464L410 459L433 466L543 473L560 497L578 518" />
            <path d="M300 527L330 517L380 517L413 511L467 513L533 528L553 552" />
            <path d="M300 597L317 610L343 647L387 693" />
            <path d="M300 677L387 693L477 657L548 642" />
            <path d="M387 693L440 750L480 762L580 717" />
            <path d="M480 762L567 800L650 830L692 845" />
            <path d="M300 773L380 797L467 830L560 875L692 935" />
        </g>
        <path d="M300 800L360 815L380 830L480 880" fill="none" stroke="#d8a0c0" strokeWidth="1.5" strokeDasharray="4 3" />
        <path d="M299 247L316 249L329 260L363 311L371 348L378 364L394 370L453 377L501 373L536 382L596 393L661 396L693 390" fill="none" stroke="#d6d6d6" strokeWidth="3" />
        <path d="M299 247L316 249L329 260L363 311L371 348L378 364L394 370L453 377L501 373L536 382L596 393L661 396L693 390" fill="none" stroke="#fff" strokeWidth="1.5" />
        <g fill="none" stroke="#aad3df" strokeWidth="2.2">
            <path d="M448 153L441 215L436 295L433 341L424 371" />
            <path d="M434 338L460 373" />
            <path d="M530 306L531 315L524 341L520 374M531 314L537 309" />
        </g>
        <g fill="#aad3df">
            <path d="M398 472L417 470L433 475L432 482L417 480L398 475Z" />
            <path d="M438 475L470 478L497 475L533 482L550 490L551 505L546 505L543 495L517 490L492 485L487 492L475 491L470 483L438 482Z" />
            <path d="M548 678L548 692L565 705L533 717L505 724L493 715L513 710L533 693Z" />
        </g>
        <path d="M692 423L551 557L549 691L692 807Z" fill="url(#ho)" stroke="#222" />
        <path d="M567 601L660 528L692 553L692 668L668 682Z" fill="url(#ho)" stroke="#222" />
        <path d="M567 601L660 528L692 553L692 668L668 682Z" fill="url(#si)" stroke="#222" />
        <path d="M668 682L648 739L692 768L692 668Z" fill="url(#hg)" stroke="#222" />
        <path d="M649 521L692 480L692 553Z" fill="#008000" stroke="#222" />
    </svg>
);

export default function App() {
    return (
        <div className="w-[1920px] h-[1080px] relative overflow-hidden flex flex-col bg-[#f0f0f0] text-[12px] leading-[20px] text-black font-['Lato',sans-serif] tracking-[-0.4px]">
            {/* window chrome */}
            <div className="h-[22px] bg-white flex items-center pl-[1px] pt-[1px] shrink-0">
                <Ic n="qgis" s={18} />
                <span className="ml-[3px] text-[#6a6a6a] text-[12.5px] tracking-[-0.1px]">*hh1 - QGIS</span>
                <div className="ml-auto flex items-center">
                    <div className="w-[46px] flex justify-center"><div className="w-[10px] h-px bg-[#777]" /></div>
                    <div className="w-[46px] flex justify-center"><svg width="11" height="11" viewBox="0 0 11 11"><path d="M3 2V.5h7.5V8H9M.5 2.5h8v8h-8z" fill="none" stroke="#777" /></svg></div>
                    <div className="w-[46px] flex justify-center"><svg width="11" height="11" viewBox="0 0 11 11"><path d="M.5.5l10 10M10.5.5l-10 10" stroke="#777" /></svg></div>
                </div>
            </div>
            <div className="h-[20px] bg-white flex items-center pl-[7px] pt-[1px] gap-[15px] text-[#6d6d6d] shrink-0">
                {menus.map((m) => <span key={m}>{m}</span>)}
            </div>
            <div className="h-[34px] flex items-center border-t border-[#e2e2e2] pb-[2px] shrink-0">
                <div className="ml-[2px]"><Grip /></div>
                <Tb n="newp" /><Tb n="open" /><Tb n="save" /><Tb n="saveas" /><Tb n="layout" /><Tb n="manager" />
                <div className="w-[2px]" /><Sep /><div className="w-[3px]" /><Grip />
                <Tb n="pan" active /><Tb n="panto" /><Tb n="zin" /><Tb n="zout" /><Tb n="z11" /><Tb n="zfull" /><Tb n="zsel" /><Tb n="zlay" /><Tb n="zlast" /><Tb n="znext" /><Tb n="map1" /><Tb n="map2" /><Tb n="map3" /><Tb n="refresh" />
                <div className="w-[2px]" /><Sep /><div className="w-[3px]" /><Grip />
                <Tb n="info" w={30} /><Tb n="action" w={31} caret="ml-[3px] mr-[1px]" /><Tb n="select" w={29} caret="ml-[3px] mr-[4px]" /><Tb n="form" w={30} caret="ml-[1px] mr-[2px]" /><Tb n="desel" /><Tb n="table" /><Tb n="abacus" /><Tb n="gear" /><Tb n="sigma" /><Tb n="ruler" caret="ml-[2px] mr-[2px]" /><Tb n="tip" /><Tb n="annot" caret="ml-[2px]" />
            </div>
            <div className="h-[34px] flex items-center border-t border-[#dadada] border-b pb-[1px] shrink-0">
                <div className="ml-[2px]"><Grip /></div>
                <Tb n="dsm" w={30} /><Tb n="gpkg" w={32} /><Tb n="shape" w={32} /><Tb n="spat" w={32} /><Tb n="chip" w={32} />
                <Sep /><div className="w-[3px]" /><Grip />
                <Tb n="pencils" w={29} /><Tb n="pencil" active w={31} /><Tb n="savee" /><Tb n="addf" w={32} /><Tb n="vertex" /><Tb n="modify" /><Tb n="trash" /><Tb n="cut" /><Tb n="copy" /><Tb n="paste" w={30} /><Tb n="undo" w={32} /><Tb n="redo" />
                <Sep /><div className="w-[3px]" /><Grip />
                <Tb n="lab1" /><Tb n="diag" /><Tb n="lab2" /><Tb n="lab3" /><Tb n="lab4" /><Tb n="lab5" /><Tb n="lab6" /><Tb n="lab7" />
                <Sep /><div className="w-[3px]" /><Grip />
                <Tb n="delta" w={32} /><Tb n="binoc" w={32} />
                <Sep /><div className="w-[3px]" /><Grip />
                <Tb n="python" w={34} /><Tb n="lay3d" w={28} />
                <Sep /><div className="w-[3px]" /><Grip />
                <Tb n="book" w={30} />
                <Sep /><div className="w-[3px]" /><Grip />
            </div>

            {/* main area */}
            <div className="h-[903px] flex shrink-0">
                <div className="w-[294px] pt-[1px] flex flex-col shrink-0">
                    <PanelHead title="Browser" />
                    <div className="h-[28px] flex items-center pl-[4px] gap-[5px] shrink-0">
                        <Ic n="lnew" s={18} /><Ic n="refresh" s={18} /><Ic n="filter" s={18} /><Ic n="collapse" s={18} /><Ic n="infos" s={18} />
                    </div>
                    <div className="h-[445px] border border-[#828790] bg-white flex overflow-hidden shrink-0">
                        <div className="flex-1 overflow-hidden">
                            {browserRows.map(([e, ic, t]) => (
                                <div key={t} className="h-[20px] flex items-center pl-[6px]">
                                    <div className="w-[10px] flex">{e > 0 && <Chev open={e === 2} />}</div>
                                    <Ic n={ic} s={17} className="ml-[7px]" />
                                    <span className="ml-[4px] whitespace-nowrap">{t}</span>
                                </div>
                            ))}
                            {xyz.map((t) => (
                                <div key={t} className="h-[20px] flex items-center pl-[42px]">
                                    <Ic n="tile" s={17} />
                                    <span className="ml-[5px] whitespace-nowrap">{t}</span>
                                </div>
                            ))}
                            <div className="h-[20px] pl-[42px]"><Ic n="tile" s={17} /></div>
                        </div>
                        <div className="w-[16px] flex flex-col items-center bg-[#f0f0f0] shrink-0">
                            <div className="h-[17px] flex items-center"><svg width="10" height="8" viewBox="0 0 10 8"><path d="M1 6l4-4 4 4" fill="none" stroke="#555" strokeWidth="1.5" /></svg></div>
                            <div className="w-full h-[167px] bg-[#cdcdcd]" />
                            <div className="mt-auto h-[17px] flex items-center"><svg width="10" height="8" viewBox="0 0 10 8"><path d="M1 2l4 4 4-4" fill="none" stroke="#555" strokeWidth="1.5" /></svg></div>
                        </div>
                    </div>
                    <div className="h-[6px] shrink-0" />
                    <PanelHead title="Layers" />
                    <div className="h-[28px] flex items-center pl-[3px] shrink-0">
                        <div className="w-[23px] flex justify-center"><Ic n="paint" s={19} /></div>
                        <div className="w-[23px] flex justify-center"><Ic n="addg" s={19} /></div>
                        <div className="w-[23px] flex justify-center"><Ic n="eye" s={19} /></div>
                        <div className="w-[23px] h-[23px] flex justify-center items-center bg-[#cce4f7] border border-[#99d1ff]"><Ic n="filter" s={19} /></div>
                        <div className="w-[22px] flex justify-center"><Ic n="eps" s={19} /></div>
                        <Caret className="mr-[6px]" />
                        <div className="w-[23px] flex justify-center"><Ic n="expand" s={19} /></div>
                        <div className="w-[23px] flex justify-center"><Ic n="collapse" s={19} /></div>
                        <div className="w-[23px] flex justify-center"><Ic n="lremove" s={19} /></div>
                    </div>
                    <div className="flex-1 border border-[#828790] bg-white overflow-hidden">
                        <LayerRow ic="tile" t="Google Satellite" />
                        <LayerRow ic="lines" t="lines" />
                        <div className="h-[20px] flex items-center">
                            <div className="w-[19px] pl-[6px] flex"><Chev open /></div>
                            <div className="flex-1 h-[20px] flex items-center bg-[#d9d9d9] pl-[4px]">
                                <Check />
                                <Ic n="poly" s={18} className="ml-[5px]" />
                                <span className="ml-[5px] font-bold underline text-[12.5px] tracking-[0.5px]">phase1_test</span>
                            </div>
                        </div>
                        <SubRow t="A1.1.1 - Broadleaved woodland - semi-n..." s={{ bg: G }} />
                        <SubRow t="A1.1.2 - Broadleaved woodland - planta..." s={{ h: G }} />
                        <SubRow t="B1.1 - Acid grassland - unimproved" s={{ h: O }} />
                        <SubRow t="B1.2 - Acid grassland - semi-improved" s={{ h: O, t: 'S' }} />
                        <LayerRow ic="tile" t="OpenStreetMap Monochrome" />
                        <LayerRow ic="tile" t="OpenStreetMap" on />
                        <LayerRow ic="tile" t="Esri Gray (light)" />
                        <LayerRow ic="raster" t="sssi" />
                        <LayerRow ic="tile" t="dtm" />
                        <LayerRow ic="tile" t="dsm" />
                    </div>
                </div>
                <div className="w-[5px] shrink-0" />
                <div className="flex-1 border-t border-l border-[#9aa0a8] overflow-hidden">
                    <div className="-ml-px -mt-px"><MapView /></div>
                </div>
            </div>

            {/* status bar */}
            <div className="h-[27px] flex items-center shrink-0 relative">
                <div className="ml-[3px] w-[201px] h-[20px] bg-white border border-[#7a7a7a] flex items-center pl-[7px] text-[#777] shrink-0">
                    <Ic n="search" s={13} />
                    <span className="ml-[6px]">Type to locate (Ctrl+K)</span>
                </div>
                <div className="ml-[984px] w-[85px] h-[18px] bg-white border border-[#adadad] shrink-0" />
                <div className="ml-[127px] w-[20px] h-[18px] bg-white border border-[#adadad] shrink-0" />
                <div className="ml-[77px] w-[81px] h-[18px] bg-white border border-[#adadad] shrink-0" />
                <div className="ml-[67px] w-[79px] h-[19px] bg-white border border-[#adadad] flex items-center pl-[20px] pr-[2px] shrink-0">
                    <span className="flex-1">°</span>
                    <div className="flex flex-col gap-[2px]">
                        <div className="w-0 h-0 border-x-[4px] border-x-transparent border-b-[4px] border-b-black" />
                        <div className="w-0 h-0 border-x-[4px] border-x-transparent border-t-[4px] border-t-black" />
                    </div>
                </div>
                <Check className="ml-[7px]" />
                <span className="ml-[5px]">Render</span>
                <Ic n="wms" s={16} className="ml-[17px]" />
                <span className="ml-[3px]">EPSG:27700</span>
                <svg width="18" height="16" viewBox="0 0 18 16" className="ml-[14px] shrink-0"><path d="M3 1h12c1 0 2 1 2 2v7c0 1-1 2-2 2H9l-3 3v-3H3c-1 0-2-1-2-2V3c0-1 1-2 2-2z" fill="#555" /><circle cx="5" cy="6.5" r="1" fill="#fff" /><circle cx="9" cy="6.5" r="1" fill="#fff" /><circle cx="13" cy="6.5" r="1" fill="#fff" /></svg>
            </div>

            {/* taskbar */}
            <div className="h-[41px] bg-[#0b2a45] flex items-center shrink-0 text-white">
                <div className="w-[48px] flex justify-center">
                    <svg width="16" height="16" viewBox="0 0 16 16"><path d="M0 2.3l6.5-.9v6.2H0zM7.3 1.3L16 0v7.6H7.3zM0 8.4h6.5v6.2L0 13.7zM7.3 8.4H16V16l-8.7-1.3z" fill="#fff" /></svg>
                </div>
                <div className="w-[344px] h-full bg-[#f2f2f2] flex items-center pl-[10px] text-[#222] text-[15px] tracking-[-0.1px]">
                    <div className="w-[20px] h-[20px] rounded-full border-[3px] border-[#111]" />
                    <span className="ml-[9px]">Type here to search</span>
                    <svg width="14" height="20" viewBox="0 0 14 20" className="ml-auto mr-[14px]"><rect x="4" y="1" width="6" height="12" rx="3" fill="none" stroke="#333" /><path d="M1 9c0 7 12 7 12 0M7 15v4M4 19h6" fill="none" stroke="#333" /></svg>
                </div>
                <div className="w-[48px] mr-[3px] flex justify-center">
                    <svg width="16" height="20" viewBox="0 0 16 20"><rect x="1" y="5" width="10" height="9" fill="none" stroke="#fff" /><path d="M1 2h10M1 17h10" stroke="#fff" /><path d="M14 4v1M14 9v5" stroke="#fff" strokeWidth="2" /></svg>
                </div>
                <TaskIcon><path d="M20 17c-2 4-5 5-8 5-5 0-9-4-9-10S7 2 12 2s9 4 9 10v2H8c0 3 2 4 5 4 2 0 4-1 5-2zM8 10h8c0-2-2-4-4-4s-4 2-4 4z" fill="#0c78d6" /></TaskIcon>
                <TaskIcon bar><path d="M2 4h8l2 2h10v16H2z" fill="#f4cf6a" /><rect x="8" y="14" width="8" height="8" fill="#3f9ae0" /></TaskIcon>
                <TaskIcon bar><path d="M20 16c-2 3-4 4-7 4-4 0-8-3-8-8s4-8 8-8 8 3 8 8v2H9c0 2 2 3 4 3s3-1 4-1zM9 10h8c0-2-2-3-4-3s-4 1-4 3z" fill="#3ab4e8" /><ellipse cx="12" cy="12" rx="11" ry="5" fill="none" stroke="#f2c230" strokeWidth="1.5" transform="rotate(-40 12 12)" /></TaskIcon>
                <TaskIcon bar active><circle cx="12" cy="11" r="7.5" fill="none" stroke="#7ba33a" strokeWidth="4" /><path d="M13 12l7 9" stroke="#7ba33a" strokeWidth="4" /><circle cx="12" cy="11" r="3" fill="#e8812e" /></TaskIcon>
                <TaskIcon bar><circle cx="12" cy="13" r="10" fill="#ef7a22" /><path d="M12 3c6 0 10 5 10 10-3-6-6-6-10-5z" fill="#f4c02c" /><circle cx="11" cy="13" r="5" fill="#3b4fa8" /></TaskIcon>
                <div className="ml-auto flex items-center">
                    <svg width="22" height="18" viewBox="0 0 22 18" className="mr-[16px]"><circle cx="14" cy="5" r="3.5" fill="none" stroke="#fff" strokeWidth="1.3" /><circle cx="7" cy="9" r="2.8" fill="none" stroke="#fff" strokeWidth="1.3" /><path d="M2 17c0-3 2-4 5-4s4 1 4 4M11 11c1-1 2-2 3-2 3 0 5 2 5 5" fill="none" stroke="#fff" strokeWidth="1.3" /></svg>
                    <svg width="13" height="8" viewBox="0 0 13 8" className="mr-[10px]"><path d="M1 7l5.5-5.5L12 7" fill="none" stroke="#fff" strokeWidth="1.3" /></svg>
                    <svg width="17" height="10" viewBox="0 0 17 10" className="mr-[8px]"><path d="M3 10C0 10 0 6 3 6c0-3 3-5 6-4 2 0 4 2 4 3 3 0 4 5 0 5z" fill="#0c78d6" /></svg>
                    <svg width="17" height="16" viewBox="0 0 17 16" className="mr-[8px]"><rect x="2" y="1" width="14" height="10" fill="none" stroke="#fff" /><rect x="0.5" y="0.5" width="5" height="5" fill="#0b2a45" stroke="#fff" /><path d="M9 11v4M5 15h8" stroke="#fff" /></svg>
                    <svg width="17" height="14" viewBox="0 0 17 14" className="mr-[7px]"><path d="M1 5h3l4-3v10l-4-3H1z" fill="none" stroke="#fff" /><path d="M10 4c1 2 1 4 0 6M13 2c2 3 2 7 0 10" fill="none" stroke="#fff" /></svg>
                    <div className="w-[60px] flex flex-col items-center text-[12.5px] tracking-[-0.1px] leading-[19px]">
                        <span>16:15</span>
                        <span>25/09/2018</span>
                    </div>
                    <div className="w-[60px] relative h-[30px]">
                        <svg width="16" height="14" viewBox="0 0 16 14" className="absolute left-[18px] top-[5px]"><path d="M0 0h16v11H8l-3 3v-3H0z" fill="#fff" /></svg>
                        <div className="absolute left-[27px] top-[11px] w-[16px] h-[16px] rounded-full bg-[#1a5a96] text-[11px] leading-[16px] text-center font-bold">1</div>
                    </div>
                </div>
            </div>

            {/* Layer Properties dialog */}
            <div className="absolute left-[692px] top-[116px] w-[975px] h-[916px] bg-[#f0f0f0] border border-[#2b88d8] shadow-[0_0_14px_rgba(0,0,0,0.45)] flex flex-col">
                <div className="h-[28px] bg-white flex items-center pl-[9px] pb-[4px] shrink-0">
                    <Ic n="qgis" s={16} />
                    <span className="ml-[4px] text-[12.5px] tracking-[-0.25px]">Layer Properties - phase1_test | Symbology</span>
                    <span className="ml-auto mr-[37px] text-[13px]">?</span>
                    <svg width="11" height="11" viewBox="0 0 11 11" className="mr-[17px]"><path d="M.5.5l10 10M10.5.5l-10 10" stroke="#222" /></svg>
                </div>
                <div className="flex-1 flex min-h-0">
                    <div className="w-[150px] bg-[#5a5a5a] flex flex-col shrink-0">
                        <div className="h-[21px] bg-white border border-[#7a7a7a] flex items-center pl-[8px] shrink-0"><Ic n="search" s={13} /></div>
                        <div className="h-[5px] shrink-0" />
                        {sidebar.map(([ic, t, on]) => (
                            <div key={t} className={`h-[38px] flex items-center pl-[2px] shrink-0 ${on ? 'bg-[#f0f0f0] text-black' : 'text-[#f2f2f2]'}`}>
                                <Ic n={ic} s={30} className={on ? 'ml-[3px]' : ''} />
                                <span className="ml-[4px]">{t}</span>
                            </div>
                        ))}
                    </div>
                    <div className="flex-1 min-w-0 flex flex-col pl-[5px] pr-[4px]">
                        <div className="mt-[3px] h-[21px] bg-[#e1e1e1] border border-[#adadad] flex items-center pl-[5px] pr-[4px] shrink-0">
                            <Ic n="categ" s={17} />
                            <span className="ml-[2px]">Categorized</span>
                            <Caret className="ml-auto" />
                        </div>
                        <div className="mt-[7px] h-[21px] flex items-center shrink-0">
                            <span className="w-[58px]">Column</span>
                            <div className="w-[472px] h-[21px] bg-white border border-[#7a7a7a] flex items-center pl-[4px] pr-[5px]">
                                <span className="text-[11px] font-bold text-[#666]">abc</span>
                                <span className="ml-[3px]">p1_code</span>
                                <svg width="10" height="8" viewBox="0 0 10 8" className="ml-auto"><path d="M1 2l4 4 4-4" fill="none" stroke="#555" /></svg>
                            </div>
                            <div className="ml-[7px] w-[18px] h-[19px] bg-[#e1e1e1] border border-[#adadad] flex items-center justify-center font-['Liberation_Serif',serif] text-[15px] text-[#444]">ε</div>
                        </div>
                        <div className="mt-[8px] h-[21px] flex items-center shrink-0">
                            <span className="w-[59px]">Symbol</span>
                            <div className="flex-1 h-[21px] bg-[#e1e1e1] border border-[#adadad] flex items-center justify-center">
                                <div className="w-[16px] h-[16px] bg-[#d2b15f] border border-[#888]" />
                                <span className="ml-[4px]">Change...</span>
                            </div>
                        </div>
                        <div className="mt-[8px] h-[21px] flex items-center shrink-0">
                            <span className="w-[59px] whitespace-nowrap">Color ramp</span>
                            <div className="flex-1 h-[21px] bg-[#e1e1e1] border border-[#adadad] flex items-center justify-center">Random colors</div>
                            <div className="w-[15px] h-[21px] bg-[#f0f0f0] border border-[#adadad] flex items-center justify-center"><Caret /></div>
                        </div>
                        <div className="mt-[6px] h-[682px] bg-white border border-[#828790] flex overflow-hidden shrink-0">
                            <div className="flex-1 overflow-hidden">
                                <div className="h-[18px] pt-[5px] flex items-center relative">
                                    <span className="w-[48px] pl-[2px]">Symbol</span>
                                    <span className="w-[39px] pl-[3px] border-l border-[#e5e5e5]">Value</span>
                                    <span className="pl-[3px] border-l border-[#e5e5e5]">Legend</span>
                                    <svg width="7" height="4" viewBox="0 0 7 4" className="absolute left-[19px] top-0"><path d="M.5.5l3 3 3-3" fill="none" stroke="#aaa" /></svg>
                                </div>
                                {rows.map(([v, l, s]) => (
                                    <div key={v} className="h-[20px] flex items-start">
                                        <Check className="ml-[3px] mt-[7px]" />
                                        <div className="ml-[6px] mt-[5px]"><Symb {...s} /></div>
                                        <span className="ml-[13px] w-[39px]">{v}</span>
                                        <span className="whitespace-nowrap">{l}</span>
                                    </div>
                                ))}
                            </div>
                            <div className="w-[15px] flex flex-col items-center bg-[#f0f0f0] shrink-0">
                                <div className="h-[20px] flex items-center"><svg width="10" height="8" viewBox="0 0 10 8"><path d="M1 6l4-4 4 4" fill="none" stroke="#555" strokeWidth="1.5" /></svg></div>
                                <div className="w-full h-[178px] bg-[#cdcdcd]" />
                                <div className="mt-auto h-[17px] flex items-center"><svg width="10" height="8" viewBox="0 0 10 8"><path d="M1 2l4 4 4-4" fill="none" stroke="#555" strokeWidth="1.5" /></svg></div>
                            </div>
                        </div>
                        <div className="mt-[8px] flex items-center shrink-0 pl-[1px] pr-[1px]">
                            <Btn className="w-[71px]">Classify</Btn>
                            <Btn className="ml-[9px] w-[25px]"><svg width="15" height="15" viewBox="0 0 15 15"><path d="M5 1h5v4h4v5h-4v4H5v-4H1V5h4z" fill="#bfe0bf" stroke="#3f8a4b" /></svg></Btn>
                            <Btn className="ml-[10px] w-[25px]"><svg width="15" height="7" viewBox="0 0 15 7"><rect x="1" y="1" width="13" height="5" fill="#fff" stroke="#e85a5a" strokeWidth="1.5" /></svg></Btn>
                            <Btn className="ml-[10px] w-[72px]">Delete all</Btn>
                            <Btn className="ml-auto w-[71px] gap-[6px]">Advanced<Caret /></Btn>
                        </div>
                        <div className="mt-[8px] h-[18px] flex items-center shrink-0">
                            <div className="w-0 h-0 ml-[5px] border-y-[5px] border-y-transparent border-l-[7px] border-l-[#333]" />
                            <span className="ml-[8px] font-bold text-[#444] text-[12.5px] tracking-[0.15px]">Layer rendering</span>
                            <div className="flex-1 h-px bg-[#adadad] ml-[6px]" />
                        </div>
                        <div className="mt-[9px] flex items-center shrink-0 pl-[1px] pr-[1px]">
                            <Btn className="w-[71px] gap-[10px]">Style<Caret /></Btn>
                            <Btn className="ml-auto w-[72px]">OK</Btn>
                            <Btn className="ml-[9px] w-[72px]">Cancel</Btn>
                            <Btn className="ml-[10px] w-[72px] !bg-[#e5f1fb] !border-[#0078d7]">Apply</Btn>
                            <Btn className="ml-[9px] w-[72px]">Help</Btn>
                        </div>
                    </div>
                </div>
            </div>
        </div>
    );
}

function LayerRow({ ic, t, on }) {
    const hasKids = t === 'OpenStreetMap';
    return (
        <div className="h-[20px] flex items-center">
            <div className="w-[23px] pl-[6px] flex">{hasKids && <Chev />}</div>
            <Check on={!!on} />
            <Ic n={ic} s={17} className="ml-[5px]" />
            <span className={`ml-[6px] whitespace-nowrap font-bold text-[12.5px] tracking-[0px] ${on ? 'text-black' : 'text-[#c4c4c4]'}`}>{t}</span>
        </div>
    );
}

function SubRow({ t, s }) {
    return (
        <div className="h-[20px] flex items-center pl-[43px]">
            <Check />
            <div className="ml-[6px]"><Symb {...s} /></div>
            <span className="ml-[5px] whitespace-nowrap">{t}</span>
        </div>
    );
}

function TaskIcon({ children, active, bar }) {
    return (
        <div className={`w-[49px] h-full flex items-center justify-center relative ${active ? 'bg-[#0d4a7c]' : ''}`}>
            <svg width="24" height="24" viewBox="0 0 24 24">{children}</svg>
            {bar && <div className="absolute bottom-0 left-[4px] right-[4px] h-[2px] bg-[#8fbbe0]" />}
        </div>
    );
}
